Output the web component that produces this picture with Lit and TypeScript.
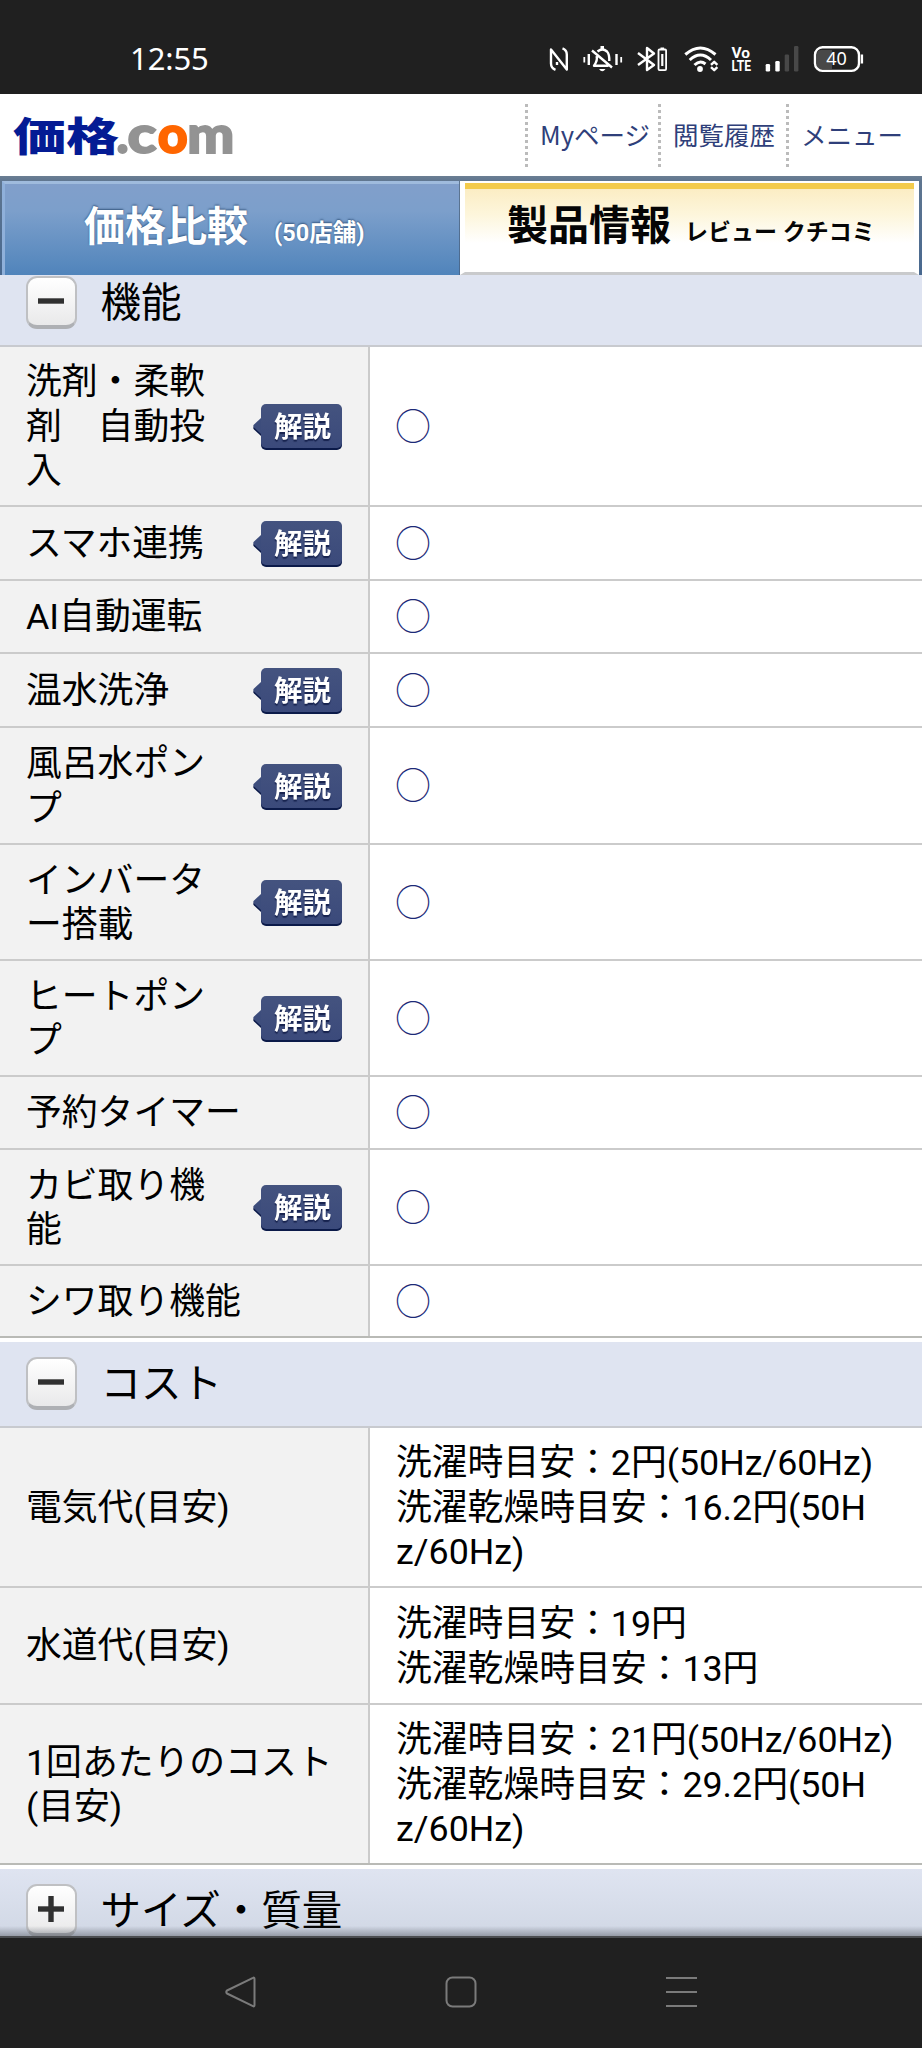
import { LitElement, html, svg, css, nothing } from "lit";
import { customElement, property } from "lit/decorators.js";

interface Row {
  label: string[];
  height: number;
  help?: boolean;
  value?: string[];
}

const FEATURES: Row[] = [
  { label: ["洗剤・柔軟", "剤　自動投", "入"], height: 160, help: true },
  { label: ["スマホ連携"], height: 74, help: true },
  { label: ["AI自動運転"], height: 73 },
  { label: ["温水洗浄"], height: 74, help: true },
  { label: ["風呂水ポン", "プ"], height: 117, help: true },
  { label: ["インバータ", "ー搭載"], height: 116, help: true },
  { label: ["ヒートポン", "プ"], height: 116, help: true },
  { label: ["予約タイマー"], height: 73 },
  { label: ["カビ取り機", "能"], height: 116, help: true },
  { label: ["シワ取り機能"], height: 72 },
];

const COSTS: Row[] = [
  {
    label: ["電気代(目安)"],
    height: 160,
    value: ["洗濯時目安：2円(50Hz/60Hz)", "洗濯乾燥時目安：16.2円(50H", "z/60Hz)"],
  },
  { label: ["水道代(目安)"], height: 117, value: ["洗濯時目安：19円", "洗濯乾燥時目安：13円"] },
  {
    label: ["1回あたりのコスト", "(目安)"],
    height: 160,
    value: ["洗濯時目安：21円(50Hz/60Hz)", "洗濯乾燥時目安：29.2円(50H", "z/60Hz)"],
  },
];

@customElement("status-bar")
class StatusBar extends LitElement {
  static styles = css`
    :host {
      display: flex;
      justify-content: space-between;
      height: 94px;
      box-sizing: border-box;
      padding: 0 57px 0 130px;
      background: #202020;
      color: #fff;
      font-family: "Noto Sans", sans-serif;
    }
    .time {
      padding-top: 36px;
      font-size: 31px;
      line-height: 44px;
      letter-spacing: -0.1px;
    }
    .icons {
      padding-top: 44px;
    }
    svg {
      display: block;
      overflow: visible;
    }
    .line {
      fill: none;
      stroke: #fff;
      stroke-width: 2.4;
      stroke-linejoin: round;
    }
    .wave {
      fill: none;
      stroke: #fff;
      stroke-width: 3;
    }
    .thin {
      fill: none;
      stroke: #fff;
      stroke-width: 1.8;
    }
    .solid {
      fill: #fff;
    }
    .dim {
      fill: #484848;
    }
    .tiny {
      fill: #fff;
      font: 700 15.5px "Roboto", sans-serif;
    }
    .level {
      fill: #fff;
      font: 400 18px "Noto Sans", sans-serif;
    }
  `;
  render() {
    return html`
      <div class="time">12:55</div>
      <div class="icons">
        <svg width="320" height="30" viewBox="545 44 320 30">
          <path class="line" d="M555.5 69.8Q551 68 551 63.5V49.5L566.8 69.5V54.5Q566.8 50 562.5 48.4M557 62v3" />
          <path class="thin" d="M584.3 57v5.5M621.2 57v5.500" />
          <path class="line" d="M588.8 54v11M616.5 54v11" />
          <path class="line" d="M592 50.5L612 67.5M596.5 56Q598 60 594 65.800H608.5M597.5 51.5Q602.5 47.5 607 51.5Q609.5 54 609.3 61" />
          <path class="solid" d="M600.5 46h3.5v4h-3.5zM599 69h6.5q-3.2 4.5-6.5 0z" />
          <path class="line" d="M638 53L654 65L647 70V48L654 53.5L638 65" />
          <rect class="thin" x="658.5" y="49.5" width="7.6" height="20.6" rx="1" />
          <path class="solid" d="M660.5 47.5h3.6v2h-3.6zM661.2 54h2.2v12h-2.200z" />
          <path class="wave" d="M685.3 54.5Q700.4 41.5 715.5 54.5M689.7 60Q700.4 50 711 60M694.500 65Q700 59.5 705.5 64" />
          <circle class="solid" cx="700" cy="69" r="2.9" />
          <path class="line" d="M711 64.800L714.2 61.8L717.400 64.8M711 67.2L714.2 70.2L717.400 67.2" />
          <text class="tiny" x="731.5" y="58" textLength="18.500" lengthAdjust="spacingAndGlyphs">Vo</text>
          <text class="tiny" x="731.5" y="71.3" textLength="19.5" lengthAdjust="spacingAndGlyphs">LTE</text>
          <rect class="solid" x="765.7" y="64" width="4.4" height="7.6" rx="1.3" />
          <rect class="solid" x="775.3" y="61" width="4.4" height="10.6" rx="1.3" />
          <rect class="dim" x="784.7" y="54.5" width="4.4" height="17" rx="1.3" />
          <rect class="dim" x="794" y="46" width="4.4" height="25.5" rx="1.3" />
          <path class="dim" d="M821 50H832V69H821Q817 69 817 65V54Q817 50 821 50Z" />
          <rect class="line" x="815" y="47.3" width="44" height="23.6" rx="7.5" />
          <rect class="solid" x="860.8" y="54.5" width="2.3" height="9" />
          <text class="level" x="836.5" y="65.3" text-anchor="middle">40</text>
        </svg>
      </div>
    `;
  }
}

@customElement("site-header")
class SiteHeader extends LitElement {
  static styles = css`
    :host {
      display: flex;
      justify-content: space-between;
      height: 82px;
      background: #fff;
    }
    .logo {
      display: block;
    }
    .kanji {
      fill: #041b94;
      font: 900 39.5px "Noto Sans CJK JP", sans-serif;
    }
    .latin {
      fill: #939393;
      stroke: #939393;
      stroke-width: 1.8;
      font: 900 50.5px "Lato", sans-serif;
    }
    .accent {
      fill: #ff6600;
      stroke: #ff6600;
    }
    nav {
      display: flex;
      padding: 10px 0 9px;
    }
    a {
      box-sizing: border-box;
      padding-left: 12px;
      border-left: 3px dotted #bbb;
      color: #2f3f7a;
      font: 400 25.5px/59px "Noto Sans CJK JP", sans-serif;
      white-space: nowrap;
    }
    .my {
      width: 133px;
    }
    .history {
      width: 128px;
    }
    .menu {
      width: 136px;
    }
  `;
  render() {
    return html`
      <svg class="logo" width="240" height="82" viewBox="0 94 240 82">
        <text class="kanji" x="13" y="150.5" textLength="106" lengthAdjust="spacingAndGlyphs">価格</text>
        <text class="latin" x="116.5" y="152.700">.</text>
        <text class="latin" x="127.5" y="152.700" textLength="29" lengthAdjust="spacingAndGlyphs">c</text>
        <text class="latin accent" x="157.8" y="152.700" textLength="30" lengthAdjust="spacingAndGlyphs">o</text>
        <text class="latin" x="187.3" y="152.700" textLength="47" lengthAdjust="spacingAndGlyphs">m</text>
      </svg>
      <nav>
        <a class="my">Myページ</a>
        <a class="history">閲覧履歴</a>
        <a class="menu">メニュー</a>
      </nav>
    `;
  }
}

@customElement("product-tabs")
class ProductTabs extends LitElement {
  static styles = css`
    :host {
      display: flex;
      box-sizing: border-box;
      height: 99px;
      padding: 5px 3px 0 2px;
      gap: 2px;
      background: linear-gradient(#6b7e93, #5f7690 5px, #48688f);
      font-family: Roboto, "Noto Sans CJK JP", sans-serif;
      font-weight: 700;
    }
    .tab {
      display: flex;
      align-items: baseline;
      box-sizing: border-box;
      white-space: nowrap;
      line-height: 60px;
    }
    .price {
      width: 457px;
      padding: 13px 0 0 79px;
      border-top: 3px solid #9fbbdd;
      border-left: 3px solid #8fb0da;
      background: linear-gradient(#819fcb, #7c9fcb 30%, #5084bb);
      color: #fff;
      text-shadow: 0 -1px 2px #35567f;
      gap: 26px;
    }
    .info {
      flex: 1;
      margin-left: -1px;
      padding: 13px 0 0 42px;
      border: solid #fff;
      border-width: 2px 5px 0;
      border-bottom: 3px solid #c9cacc;
      background: linear-gradient(#f3cb4c 6px, #fbedc4 6px, #fdf6dc 32px, #fff 60px);
      color: #050505;
      gap: 14px;
    }
    .main {
      font-size: 41px;
    }
    .sub {
      font-size: 23.5px;
    }
    .info .sub {
      font-size: 23px;
    }
  `;
  render() {
    return html`
      <div class="tab price"><span class="main">価格比較</span><span class="sub">(50店舗)</span></div>
      <div class="tab info"><span class="main">製品情報</span><span class="sub">レビュー クチコミ</span></div>
    `;
  }
}

@customElement("section-bar")
class SectionBar extends LitElement {
  @property() heading = "";
  @property({ type: Boolean }) collapsed = false;
  static styles = css`
    :host {
      display: flex;
      align-items: flex-start;
      box-sizing: border-box;
      height: 86px;
      padding: 15px 0 0 25.5px;
      gap: 24px;
      border-bottom: 2px solid #c8cacf;
      background: #dfe4f1;
    }
    .toggle {
      display: grid;
      place-items: center;
      box-sizing: border-box;
      width: 51px;
      height: 53px;
      padding-bottom: 1px;
      border: 2px solid #bfc0c3;
      border-bottom: 4px solid #aeb0b4;
      border-radius: 11px;
      background: linear-gradient(#fff, #e9e9ea);
    }
    path {
      stroke: #303030;
      stroke-width: 5.4;
    }
    h2 {
      margin: -6px 0 0;
      font: 400 40.5px/60px "Noto Sans CJK JP", sans-serif;
      color: #000;
    }
  `;
  render() {
    return html`
      <div class="toggle">
        <svg width="26" height="26" viewBox="0 0 26 26">
          <path d="M0 13H26" />
          ${this.collapsed ? svg`<path d="M13 0V26" />` : nothing}
        </svg>
      </div>
      <h2>${this.heading}</h2>
    `;
  }
}

@customElement("spec-table")
class SpecTable extends LitElement {
  @property({ attribute: false }) rows: Row[] = [];
  static styles = css`
    :host {
      display: block;
      border-bottom: 4px solid #fff;
      background: #fff;
      font: 400 35.8px/44.5px Roboto, "Noto Sans CJK JP", sans-serif;
      color: #000;
    }
    .row {
      display: grid;
      grid-template-columns: 370px 1fr;
      box-sizing: border-box;
      border-bottom: 2px solid #cbcbcb;
    }
    .row:last-child {
      border-bottom-color: #b9bab6;
    }
    .name {
      display: flex;
      align-items: center;
      justify-content: space-between;
      box-sizing: border-box;
      padding: 0 26px 0 26px;
      border-right: 2px solid #cbcbcb;
      background: #f2f2f2;
    }
    .value {
      display: flex;
      align-items: center;
      padding-left: 26px;
    }
    .lines {
      padding-top: 2px;
      white-space: nowrap;
    }
    .line {
      display: block;
      height: 44.5px;
    }
    .mark {
      margin: 0 0 5px -1px;
      color: #1d2a78;
      font: 300 36px/44px "Noto Sans CJK JP", sans-serif;
    }
    .help {
      display: flex;
      align-items: center;
      filter: drop-shadow(0 2px 0 #0b1a49);
    }
    .tip {
      display: block;
      fill: #3d4d7c;
    }
    .bubble {
      box-sizing: border-box;
      width: 81px;
      height: 44px;
      padding-left: 2px;
      border-radius: 5px;
      background: linear-gradient(#44537f, #3b4a7b);
      color: #fff;
      text-align: center;
      text-shadow: 0 2px 1px #17234f;
      font: 700 28.5px/42px "Noto Sans CJK JP", sans-serif;
    }
  `;
  render() {
    return this.rows.map(
      (r) => html`
        <div class="row" style="height:${r.height}px">
          <div class="name">
            <div class="lines">${r.label.map((l) => html`<span class="line">${l}</span>`)}</div>
            ${r.help
              ? html`<div class="help">
                  <svg class="tip" width="8" height="17" viewBox="0 0 8 17"><path d="M8 0L1 6.5Q-.5 8 1 9.5L8 16Z" /></svg>
                  <div class="bubble">解説</div>
                </div>`
              : nothing}
          </div>
          <div class="value">
            ${r.value
              ? html`<div class="lines">${r.value.map((l) => html`<span class="line">${l}</span>`)}</div>`
              : html`<span class="mark">○</span>`}
          </div>
        </div>
      `
    );
  }
}

@customElement("nav-bar")
class NavBar extends LitElement {
  static styles = css`
    :host {
      display: grid;
      grid-template-columns: 32px 32px 32px;
      justify-content: center;
      align-items: center;
      column-gap: 188px;
      box-sizing: border-box;
      height: 112px;
      padding-bottom: 2px;
      border-top: 2px solid #4b4d50;
      background: #202020;
    }
    svg {
      display: block;
      fill: none;
      stroke: #7b7b7b;
      stroke-width: 2;
      stroke-linejoin: round;
    }
  `;
  render() {
    return html`
      <svg width="32" height="32" viewBox="0 0 32 32"><path d="M28 1.8Q29.500 1 29.500 3V29Q29.500 31 28 30.200L2 17.500Q0.500 16 2 14.500Z" /></svg>
      <svg width="32" height="32" viewBox="0 0 32 32"><rect x="1.500" y="1.500" width="29" height="29" rx="6" /></svg>
      <svg width="32" height="32" viewBox="0 0 32 32"><path d="M1 2H32M1 16H32M1 30H32" /></svg>
    `;
  }
}

@customElement("app-root")
class AppRoot extends LitElement {
  static styles = css`
    :host {
      display: flex;
      flex-direction: column;
      width: 922px;
      height: 2048px;
      overflow: hidden;
      background: #fff;
    }
    .page {
      position: relative;
      flex: 1;
      min-height: 0;
      overflow: hidden;
    }
    .first {
      margin-top: -14px;
    }
    .last {
      background: linear-gradient(#dfe4f1, #d2d9e6 60px);
    }
    .shade {
      position: absolute;
      left: 0;
      right: 0;
      bottom: 0;
      height: 10px;
      background: linear-gradient(rgba(90, 95, 105, 0), rgba(90, 95, 105, 0.5));
    }
  `;
  render() {
    return html`
      <status-bar></status-bar>
      <site-header></site-header>
      <product-tabs></product-tabs>
      <div class="page">
        <section-bar class="first" heading="機能"></section-bar>
        <spec-table .rows=${FEATURES}></spec-table>
        <section-bar heading="コスト"></section-bar>
        <spec-table .rows=${COSTS}></spec-table>
        <section-bar class="last" heading="サイズ・質量" collapsed></section-bar>
        <div class="shade"></div>
      </div>
      <nav-bar></nav-bar>
    `;
  }
}
